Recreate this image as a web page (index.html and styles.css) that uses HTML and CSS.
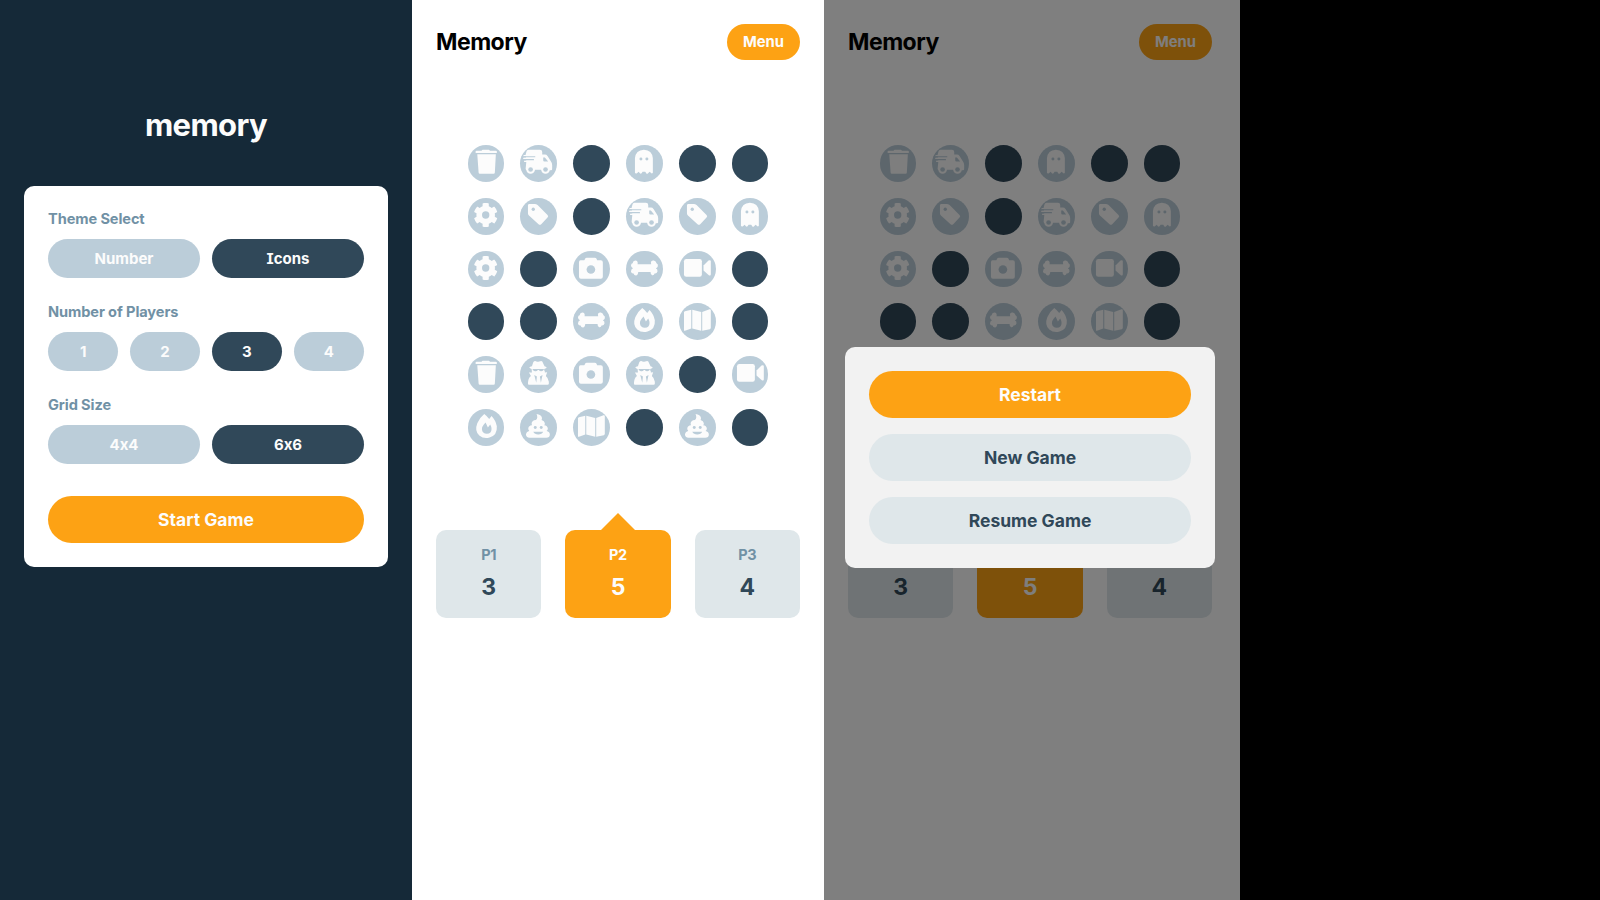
FILE: index.html
```html
<!DOCTYPE html>
<html lang="en">
<head>
<meta charset="utf-8">
<title>Memory</title>
<link rel="stylesheet" href="styles.css">
</head>
<body>
<svg class="sprite" aria-hidden="true">
  <symbol id="trash" viewBox="0 0 111 111">
    <path class="w" d="M23 19Q23 17 26 17H41Q42 14 45 14H62Q65 14 66 17H84Q87 17 87 19V24H23ZM28 28H84L81 83Q81 87 77 87H36Q32 87 32 83Z"/>
  </symbol>
  <symbol id="truck" viewBox="0 0 111 111">
    <path class="w" d="M17 29 20 18Q22 14 27 14H60Q67 14 67 21V29H75Q80 29 83 33L93 49Q97 54 97 60V70Q98 76 94 76H21Q17 76 17 72L19 51Z"/>
    <path class="w" d="M11 30H46V34H10ZM11 38H44V42H9ZM13 47H38V51H12Z"/>
    <path class="b" d="M10 34H46V37H10ZM9 42.500H42V46H9ZM70 38H75L85 50H74Q70 50 70 46ZM45 75H64V90H45Z"/>
    <circle class="w" cx="32" cy="74" r="13"/><circle class="w" cx="77" cy="74" r="13"/>
    <circle class="b" cx="32" cy="74" r="7"/><circle class="b" cx="77" cy="74" r="7"/>
  </symbol>
  <symbol id="ghost" viewBox="0 0 111 111">
    <path class="w" d="M27 84V40Q29 15 54 14Q79 15 81 40V84Q78 88 75 84L71 81L66 86Q63 88 61 85L58 81H50L47 85Q44 88 42 85L38 81L33 85Q29 88 27 84Z"/>
    <circle class="b" cx="45" cy="42" r="4.500"/><circle class="b" cx="63" cy="42" r="4.500"/>
  </symbol>
  <symbol id="gear" viewBox="0 0 111 111">
    <path class="w" transform="translate(16 14) scale(.146)" d="M487 316l-43-25c4-23 4-47 0-70l43-25c5-3 7-9 5-14-11-36-30-68-55-95-4-4-10-5-15-2l-42 25c-18-15-38-27-60-35V26c0-6-4-11-10-12-36-8-74-8-109 0-5 1-9 6-9 12V75c-22 8-43 20-61 35L89 86c-5-3-11-2-15 2-25 27-44 59-55 95-2 5 1 11 6 14L67 221c-4 23-4 47 0 70l-42 25c-5 3-8 9-6 14 11 36 30 68 55 95 4 4 10 5 15 2l42-25c18 16 39 28 61 36v49c0 5 4 10 9 11 37 9 75 8 110 0 5-1 9-6 9-11v-49c22-8 43-20 61-36l42 25c5 3 11 2 15-2 25-27 44-59 55-95 2-5-1-11-6-14zM256 332a76 76 0 1 1 0-152 76 76 0 0 1 0 152z"/>
  </symbol>
  <symbol id="tag" viewBox="0 0 111 111">
    <path class="w" d="M24 22Q24 18 29 18H45Q49 18 53 21L83 51Q87 55 83 59L64 79Q60 83 56 79L27 53Q24 50 24 45Z"/>
    <circle class="b" cx="40" cy="34" r="5"/>
  </symbol>
  <symbol id="camera" viewBox="0 0 111 111">
    <path class="w" d="M23 28H34L38 21Q39 20 42 20H66Q69 20 70 22L73 28H84Q90 28 90 34V78Q90 84 84 84H24Q18 84 18 78V34Q18 28 23 28Z"/>
    <circle class="b" cx="54" cy="56" r="13"/>
  </symbol>
  <symbol id="bone" viewBox="0 0 111 111">
    <path class="w" d="M35 40H76C73 31 79 28 84 29Q91 31 92 37Q98 40 96 46Q95 51 90 52Q96 55 95 62Q93 69 86 68Q85 74 79 73Q74 72 74 63H37Q36 73 30 74Q24 74 23 68Q16 69 15 62Q15 55 21 52Q15 49 15 43Q16 37 20 37Q21 29 28 29Q37 30 35 40Z"/>
  </symbol>
  <symbol id="video" viewBox="0 0 111 111">
    <rect class="w" x="15" y="24" width="54" height="54" rx="7"/>
    <path class="w" d="M74 44 89 29Q96 26 96 32V70Q96 76 90 73L74 59Z"/>
  </symbol>
  <symbol id="fire" viewBox="0 0 111 111">
    <path class="w" fill-rule="evenodd" d="M49 15Q57 21 64 30L71 21Q83 33 87 52Q89 79 65 86Q48 91 34 80Q19 66 28 43Q35 26 49 15ZM53 41Q41 53 42 61Q43 74 57 75Q71 73 71 60Q71 54 67 47L60 56Z"/>
  </symbol>
  <symbol id="map" viewBox="0 0 111 111">
    <path class="w" d="M15 29Q15 26 18 25L37 20V77L18 84Q15 85 15 81ZM40 20 67 27V84L40 77ZM70 27 92 19Q96 18 96 22V75Q96 78 93 79L70 84Z"/>
  </symbol>
  <symbol id="spy" viewBox="0 0 111 111">
    <path class="w" d="M40 19Q42 15 46 15Q51 18 55 17L64 15Q68 16 69 20L74 31Q82 33 80 36Q77 38 73 39V43Q76 47 75 50L82 49L78 60Q86 66 87 78V84Q87 87 83 87H27Q24 87 24 83Q24 67 33 60L27 50H36L35 39Q29 37 28 35Q29 32 36 31Z"/>
    <path class="b" d="M38 39H72V41Q70 46 64 46Q59 46 57 42H54Q51 47 45 46Q39 44 38 41ZM43 57 51 62 49 81ZM68 57 60 62 63 81Z"/>
  </symbol>
  <symbol id="poo" viewBox="0 0 111 111">
    <path class="w" d="M50 15Q64 17 66 26Q67 30 65 33Q74 35 75 43Q75 47 73 49Q83 50 84 59Q84 64 80 66Q90 68 90 77Q90 87 79 87H29Q18 86 18 77Q19 68 28 66Q24 62 25 58Q26 50 36 49Q33 42 38 37Q42 33 48 33Q55 28 50 15Z"/>
    <circle class="b" cx="46" cy="56" r="4.500"/><circle class="b" cx="64" cy="56" r="4.500"/>
    <path class="b" d="M40 69H70Q66 77 55 77Q44 77 40 69Z"/>
  </symbol>
</svg>

<main class="screens">
  <section class="setup">
    <h1 class="logo">memory</h1>
    <form class="card">
      <div class="field">
        <span class="label">Theme Select</span>
        <div class="options two"><button type="button" class="option">Number</button><button type="button" class="option selected icons">Icons</button></div>
      </div>
      <div class="field">
        <span class="label">Number of Players</span>
        <div class="options four"><button type="button" class="option">1</button><button type="button" class="option">2</button><button type="button" class="option selected">3</button><button type="button" class="option">4</button></div>
      </div>
      <div class="field">
        <span class="label">Grid Size</span>
        <div class="options two"><button type="button" class="option">4x4</button><button type="button" class="option selected">6x6</button></div>
      </div>
      <button type="button" class="action primary start">Start Game</button>
    </form>
  </section>

  <section class="game"></section>

  <section class="paused">
    <div class="game"></div>
    <div class="overlay">
      <div class="dialog">
        <button type="button" class="action primary">Restart</button>
        <button type="button" class="action">New Game</button>
        <button type="button" class="action">Resume Game</button>
      </div>
    </div>
  </section>
</main>
<script src="game.js"></script>
</body>
</html>
```
FILE: styles.css
```css
* { box-sizing: border-box; }

body {
  margin: 0;
  height: 900px;
  overflow: hidden;
  background: #000;
  font-family: Inter, "Liberation Sans", sans-serif;
  font-weight: 700;
}

button {
  border: 0;
  padding: 0;
  font: inherit;
  letter-spacing: inherit;
}

.sprite { display: none; }
.w { fill: #fcfcfc; }
.b { fill: #bbcdd9; }

.screens { display: flex; height: 900px; }

/* Setup screen */
.setup {
  width: 412px;
  padding: 105px 24px 0;
  background: #152938;
}

.logo {
  margin: 0 0 41px;
  height: 40px;
  line-height: 40px;
  font-size: 31px;
  letter-spacing: -0.6px;
  text-align: center;
  color: #fcfcfc;
}

.card {
  display: flex;
  flex-direction: column;
  gap: 24.4px;
  height: 381px;
  padding: 24px;
  border-radius: 10px;
  background: #fff;
}

.label {
  display: block;
  height: 18px;
  margin-bottom: 11px;
  line-height: 18px;
  font-size: 14.6px;
  letter-spacing: -0.1px;
  color: #7191a5;
}

.options { display: grid; column-gap: 12px; }
.two { grid-template-columns: 1fr 1fr; }
.four { grid-template-columns: repeat(4, 1fr); column-gap: 11.4px; }

.option {
  height: 39.4px;
  border-radius: 26px;
  background: #bbcdd9;
  color: #fcfcfc;
  font-size: 15px;
  font-feature-settings: "calt" 0;
}

.option.selected { background: #304859; }
.option.icons { font-feature-settings: "cv08"; }

.action {
  height: 47px;
  flex: none;
  border-radius: 26px;
  background: #dfe7ea;
  color: #304859;
  font-size: 17.5px;
}

.action.primary { background: #fda214; color: #fcfcfc; }
.start { margin-top: 8px; }

/* Game screen */
.game {
  width: 412px;
  height: 900px;
  padding: 24px;
  background: #fff;
}

.bar {
  display: flex;
  align-items: center;
  justify-content: space-between;
  height: 36px;
}

.title { margin: 0; font-size: 23px; letter-spacing: -0.5px; color: #000; }

.menu {
  width: 73px;
  height: 36px;
  border-radius: 18px;
  background: #fda214;
  color: #fcfcfc;
  font-size: 14.8px;
}

.grid {
  display: grid;
  grid-template-columns: repeat(6, 36.8px);
  gap: 16px;
  width: max-content;
  margin: 85px auto 0;
}

.tile { height: 36.8px; border-radius: 50%; background: #304859; }
.tile.open { background: #bbcdd9; }
.tile svg { display: block; width: 100%; height: 100%; }

.scores {
  display: grid;
  grid-template-columns: repeat(3, 1fr);
  gap: 24px;
  margin-top: 84px;
}

.score {
  display: flex;
  flex-direction: column;
  align-items: center;
  gap: 8px;
  height: 88px;
  padding-top: 15px;
  border-radius: 10px;
  background: #dfe7ea;
  color: #304859;
}

.player { line-height: 20px; font-size: 14.5px; letter-spacing: -0.3px; color: #7191a5; }
.points { line-height: 28px; font-size: 23px; }

.score.active { position: relative; background: #fda214; color: #fcfcfc; }
.active .player { color: #fcfcfc; }
.score.active::before {
  content: "";
  position: absolute;
  top: -17px;
  left: calc(50% - 17px);
  border: 17px solid transparent;
  border-top: 0;
  border-bottom-color: #fda214;
}

/* Paused screen */
.paused { position: relative; width: 416px; background: #fff; }

.overlay {
  position: absolute;
  inset: 0;
  display: flex;
  align-items: flex-start;
  padding: 347px 25px 0 21px;
  background: rgba(0, 0, 0, 0.5);
}

.dialog {
  display: flex;
  flex: 1;
  flex-direction: column;
  gap: 16px;
  padding: 24px;
  border-radius: 10px;
  background: #f2f2f2;
}
```
FILE: game.js
```js
// Tiles row by row; null is a face-down tile.
const tiles = [
  "trash", "truck", null, "ghost", null, null,
  "gear", "tag", null, "truck", "tag", "ghost",
  "gear", null, "camera", "bone", "video", null,
  null, null, "bone", "fire", "map", null,
  "trash", "spy", "camera", "spy", null, "video",
  "fire", "poo", "map", null, "poo", null
];
const scores = [["P1", 3], ["P2", 5], ["P3", 4]];

const tile = icon => icon
  ? `<div class="tile open"><svg><use href="#${icon}"/></svg></div>`
  : `<div class="tile"></div>`;

const score = ([name, points], i) =>
  `<div class="score${i === 1 ? " active" : ""}"><span class="player">${name}</span><span class="points">${points}</span></div>`;

document.querySelectorAll(".game").forEach(game => {
  game.innerHTML = `
    <header class="bar"><h2 class="title">Memory</h2><button type="button" class="menu">Menu</button></header>
    <div class="grid">${tiles.map(tile).join("")}</div>
    <div class="scores">${scores.map(score).join("")}</div>`;
});
```
